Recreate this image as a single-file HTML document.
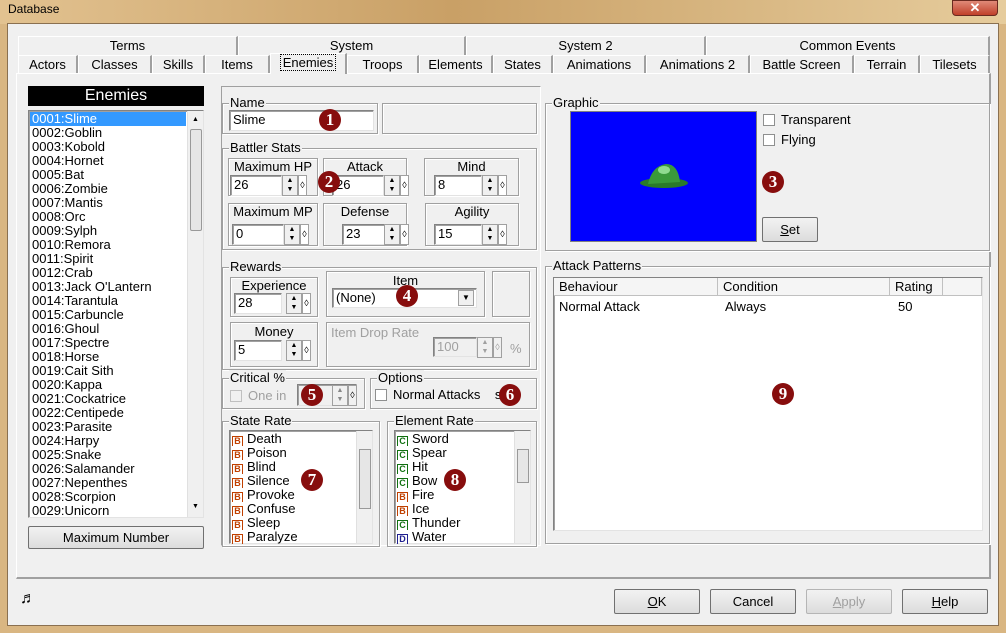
<!DOCTYPE html><html><head><style>
*{box-sizing:border-box}body{margin:0;width:1006px;height:633px;overflow:hidden;background:#d9b682;font-family:"Liberation Sans",sans-serif;font-size:13px;color:#000;position:relative}
.a{position:absolute}
#win{left:7px;top:23px;width:992px;height:603px;background:#f0f0f0;border:1px solid #8a7050}
.tab{position:absolute;height:19px;border:1px solid #fff;border-right:2px solid #a0a0a0;border-bottom:none;text-align:center;line-height:18px;background:#f0f0f0;font-size:13px}
.gb{position:absolute;border:1px solid #a0a0a0;box-shadow:inset 1px 1px 0 #fff,1px 1px 0 #fff}
.gb>.l{position:absolute;top:-9px;left:6px;background:#f0f0f0;padding:0 1px;line-height:16px}
.in{position:absolute;background:#fff;border:1px solid #828282;border-right-color:#e3e3e3;border-bottom-color:#e3e3e3;box-shadow:inset 1px 1px 0 #a0a0a0;padding-left:3px;line-height:18px}
.btn{position:absolute;border:1px solid #707070;background:linear-gradient(#f2f2f2,#dcdcdc);text-align:center;border-radius:2px}
.bd{position:absolute;width:22px;height:22px;border-radius:50%;background:#870d0d;color:#fff;font:bold 17px "Liberation Serif",serif;text-align:center;line-height:22px}
.sp{position:absolute;width:16px;height:21px;background:#f0f0f0;border:1px solid #a0a0a0;font-size:7px;line-height:9px;text-align:center}
.dm{position:absolute;width:9px;height:21px;border:1px solid #a0a0a0;font-size:9px;line-height:19px;text-align:center;background:#fff}
.r{height:14px;line-height:14px;overflow:hidden;white-space:nowrap}
.ic{display:inline-block;width:11px;height:11px;border:1px solid;font:bold 9px "Liberation Sans",sans-serif;line-height:9px;text-align:center;margin:0 4px 0 2px;vertical-align:-1px}
.B{color:#c04000;border-color:#c04000}.C{color:#107010;border-color:#107010}.D{color:#202090;border-color:#202090}
.sb{position:absolute;width:16px;background:#f0f0f0;border-left:1px solid #e0e0e0}
.th{position:absolute;top:0;height:18px;border-right:1px solid #c0c0c0;border-bottom:1px solid #c0c0c0;padding-left:5px;line-height:17px;background:#f5f5f5}
.cb{display:inline-block;width:12px;height:12px;border:1px solid #8e8f8f;background:#fff;vertical-align:-2px;margin-right:6px}
</style></head><body>
<div class="a" style="left:0;top:0;width:1006px;height:24px;background:linear-gradient(90deg,#e2c290,#c9a066 45%,#e6cc9c)"></div>
<div class="a" style="left:8px;top:2px;font-size:12px">Database</div>
<div class="a" style="left:952px;top:0;width:46px;height:16px;background:linear-gradient(#e08a78,#c0402a);border:1px solid #6a2a20;border-radius:0 0 4px 4px;color:#fff;text-align:center;font-weight:bold;line-height:14px">✕</div>
<div id="win" class="a"></div>
<div class="tab" style="left:18px;top:36px;width:220px">Terms</div>
<div class="tab" style="left:238px;top:36px;width:228px">System</div>
<div class="tab" style="left:466px;top:36px;width:240px">System 2</div>
<div class="tab" style="left:706px;top:36px;width:284px">Common Events</div>
<div class="tab" style="left:18px;top:55px;width:60px">Actors</div>
<div class="tab" style="left:78px;top:55px;width:74px">Classes</div>
<div class="tab" style="left:152px;top:55px;width:53px">Skills</div>
<div class="tab" style="left:205px;top:55px;width:65px">Items</div>
<div class="tab" style="left:270px;top:53px;width:77px;height:21px;z-index:2"><span style="outline:1px dotted #000;padding:0 2px">Enemies</span></div>
<div class="tab" style="left:347px;top:55px;width:72px">Troops</div>
<div class="tab" style="left:419px;top:55px;width:74px">Elements</div>
<div class="tab" style="left:493px;top:55px;width:60px">States</div>
<div class="tab" style="left:553px;top:55px;width:93px">Animations</div>
<div class="tab" style="left:646px;top:55px;width:104px">Animations 2</div>
<div class="tab" style="left:750px;top:55px;width:104px">Battle Screen</div>
<div class="tab" style="left:854px;top:55px;width:66px">Terrain</div>
<div class="tab" style="left:920px;top:55px;width:70px">Tilesets</div>
<div class="a" style="left:16px;top:73px;width:975px;height:506px;border:1px solid #fff;border-right:2px solid #a0a0a0;border-bottom:2px solid #a0a0a0"></div>
<div class="a" style="left:28px;top:86px;width:176px;height:20px;background:#000;color:#fff;font-size:16px;text-align:center;line-height:20px">Enemies</div>
<div class="in" style="left:28px;top:110px;width:176px;height:408px;padding:1px 0 0 1px;line-height:14px">
<div style="background:#3399ff;color:#fff;width:156px;padding-left:2px">0001:Slime</div>
<div style="padding-left:2px">0002:Goblin<br>0003:Kobold<br>0004:Hornet<br>0005:Bat<br>0006:Zombie<br>0007:Mantis<br>0008:Orc<br>0009:Sylph<br>0010:Remora<br>0011:Spirit<br>0012:Crab<br>0013:Jack O'Lantern<br>0014:Tarantula<br>0015:Carbuncle<br>0016:Ghoul<br>0017:Spectre<br>0018:Horse<br>0019:Cait Sith<br>0020:Kappa<br>0021:Cockatrice<br>0022:Centipede<br>0023:Parasite<br>0024:Harpy<br>0025:Snake<br>0026:Salamander<br>0027:Nepenthes<br>0028:Scorpion<br>0029:Unicorn</div>
<div class="sb" style="right:0;top:0;height:406px"><div style="position:absolute;left:2px;top:18px;width:12px;height:102px;border:1px solid #999;border-radius:2px;background:#e6e6e6"></div><div style="position:absolute;left:4px;top:2px;font-size:7px">▲</div><div style="position:absolute;left:4px;bottom:3px;font-size:7px">▼</div></div>
</div>
<div class="btn" style="left:28px;top:526px;width:176px;height:23px;line-height:21px">Maximum Number</div>
<div class="a" style="left:221px;top:86px;width:320px;height:460px;border:1px solid #a0a0a0;border-right-color:#fff;border-bottom-color:#fff"></div>
<div class="gb" style="left:222px;top:103px;width:156px;height:31px"><span class="l">Name</span></div>
<div class="in" style="left:229px;top:110px;width:145px;height:21px">Slime</div>
<div class="gb" style="left:382px;top:103px;width:155px;height:31px"></div>
<div class="gb" style="left:222px;top:148px;width:315px;height:102px"><span class="l">Battler Stats</span></div>
<div class="gb" style="left:228px;top:158px;width:90px;height:38px;text-align:center;line-height:16px">Maximum HP</div>
<div class="gb" style="left:323px;top:158px;width:84px;height:38px;text-align:center;line-height:16px">Attack</div>
<div class="gb" style="left:424px;top:158px;width:95px;height:38px;text-align:center;line-height:16px">Mind</div>
<div class="gb" style="left:228px;top:203px;width:90px;height:43px;text-align:center;line-height:16px">Maximum MP</div>
<div class="gb" style="left:323px;top:203px;width:84px;height:43px;text-align:center;line-height:16px">Defense</div>
<div class="gb" style="left:425px;top:203px;width:94px;height:43px;text-align:center;line-height:16px">Agility</div>
<div class="in" style="left:230px;top:175px;width:52px;height:21px">26</div><div class="sp" style="left:282px;top:175px">▲<br>▼</div><div class="dm" style="left:298px;top:175px">◊</div>
<div class="in" style="left:332px;top:175px;width:52px;height:21px">26</div><div class="sp" style="left:384px;top:175px">▲<br>▼</div><div class="dm" style="left:400px;top:175px">◊</div>
<div class="in" style="left:434px;top:175px;width:48px;height:21px">8</div><div class="sp" style="left:482px;top:175px">▲<br>▼</div><div class="dm" style="left:498px;top:175px">◊</div>
<div class="in" style="left:232px;top:224px;width:52px;height:21px">0</div><div class="sp" style="left:284px;top:224px">▲<br>▼</div><div class="dm" style="left:300px;top:224px">◊</div>
<div class="in" style="left:342px;top:224px;width:52px;height:21px">23</div><div class="sp" style="left:384px;top:224px">▲<br>▼</div><div class="dm" style="left:400px;top:224px">◊</div>
<div class="in" style="left:434px;top:224px;width:48px;height:21px">15</div><div class="sp" style="left:482px;top:224px">▲<br>▼</div><div class="dm" style="left:498px;top:224px">◊</div>
<div class="gb" style="left:222px;top:267px;width:315px;height:103px"><span class="l">Rewards</span></div>
<div class="gb" style="left:230px;top:277px;width:88px;height:40px;text-align:center;line-height:16px">Experience</div>
<div class="in" style="left:234px;top:293px;width:48px;height:21px">28</div><div class="sp" style="left:286px;top:293px">▲<br>▼</div><div class="dm" style="left:302px;top:293px">◊</div>
<div class="gb" style="left:326px;top:271px;width:159px;height:46px;text-align:center;line-height:18px">Item</div>
<div class="in" style="left:332px;top:288px;width:145px;height:20px;line-height:17px">(None)</div><div class="sp" style="left:458px;top:290px;height:16px;font-size:8px;line-height:14px">▼</div>
<div class="gb" style="left:492px;top:271px;width:38px;height:46px"></div>
<div class="gb" style="left:230px;top:322px;width:88px;height:45px;text-align:center;line-height:18px">Money</div>
<div class="in" style="left:234px;top:340px;width:48px;height:21px">5</div><div class="sp" style="left:286px;top:340px">▲<br>▼</div><div class="dm" style="left:302px;top:340px">◊</div>
<div class="gb" style="left:326px;top:322px;width:204px;height:45px"></div>
<div class="a" style="left:331px;top:325px;color:#a0a0a0">Item Drop Rate</div>
<div class="in" style="left:433px;top:337px;width:44px;height:20px;background:#f0f0f0;color:#a0a0a0;line-height:17px">100</div><div class="sp" style="left:477px;top:337px;color:#a0a0a0">▲<br>▼</div><div class="dm" style="left:493px;top:337px;background:#f0f0f0;color:#a0a0a0">◊</div>
<div class="a" style="left:510px;top:341px;color:#a0a0a0">%</div>
<div class="gb" style="left:222px;top:378px;width:143px;height:31px"><span class="l">Critical %</span></div>
<div class="a" style="left:230px;top:388px;color:#a0a0a0"><span class="cb" style="background:#f0f0f0;border-color:#c0c0c0"></span>One in</div>
<div class="in" style="left:297px;top:384px;width:60px;height:22px;background:#f0f0f0"></div><div class="sp" style="left:332px;top:385px;color:#888">▲<br>▼</div><div class="dm" style="left:348px;top:385px;background:#f0f0f0">◊</div>
<div class="gb" style="left:370px;top:378px;width:167px;height:31px"><span class="l">Options</span></div>
<div class="a" style="left:375px;top:387px"><span class="cb"></span>Normal Attacks &nbsp; &nbsp;s</div>
<div class="gb" style="left:222px;top:421px;width:158px;height:126px"><span class="l">State Rate</span></div>
<div class="in" style="left:229px;top:430px;width:144px;height:114px;padding:1px 0 0;line-height:14px">
<div class="r"><span class="ic B">B</span>Death</div><div class="r"><span class="ic B">B</span>Poison</div><div class="r"><span class="ic B">B</span>Blind</div><div class="r"><span class="ic B">B</span>Silence</div><div class="r"><span class="ic B">B</span>Provoke</div><div class="r"><span class="ic B">B</span>Confuse</div><div class="r"><span class="ic B">B</span>Sleep</div><div class="r"><span class="ic B">B</span>Paralyze</div>
<div class="sb" style="right:0;top:0;height:112px"><div style="position:absolute;left:2px;top:18px;width:12px;height:60px;border:1px solid #999;background:#e6e6e6"></div></div></div>
<div class="gb" style="left:387px;top:421px;width:150px;height:126px"><span class="l">Element Rate</span></div>
<div class="in" style="left:394px;top:430px;width:137px;height:114px;padding:1px 0 0;line-height:14px">
<div class="r"><span class="ic C">C</span>Sword</div><div class="r"><span class="ic C">C</span>Spear</div><div class="r"><span class="ic C">C</span>Hit</div><div class="r"><span class="ic C">C</span>Bow</div><div class="r"><span class="ic B">B</span>Fire</div><div class="r"><span class="ic B">B</span>Ice</div><div class="r"><span class="ic C">C</span>Thunder</div><div class="r"><span class="ic D">D</span>Water</div>
<div class="sb" style="right:0;top:0;height:112px"><div style="position:absolute;left:2px;top:18px;width:12px;height:34px;border:1px solid #999;background:#e6e6e6"></div></div></div>
<div class="gb" style="left:545px;top:103px;width:445px;height:148px"><span class="l">Graphic</span></div>
<div class="a" style="left:570px;top:111px;width:187px;height:131px;background:#0000ff;border:1px solid #808080"></div>
<svg class="a" style="left:638px;top:160px" width="52" height="32"><ellipse cx="26" cy="23" rx="24" ry="5" fill="#2a7a2a"/><path d="M10 24 Q14 6 28 4 Q40 4 42 22 Z" fill="#3a9a3a"/><ellipse cx="26" cy="10" rx="6" ry="4" fill="#8fdc8f"/></svg>
<div class="a" style="left:763px;top:112px"><span class="cb"></span>Transparent</div>
<div class="a" style="left:763px;top:132px"><span class="cb"></span>Flying</div>
<div class="btn" style="left:762px;top:217px;width:56px;height:25px;line-height:23px"><u>S</u>et</div>
<div class="gb" style="left:545px;top:266px;width:445px;height:278px"><span class="l">Attack Patterns</span></div>
<div class="in" style="left:553px;top:277px;width:430px;height:254px;padding:0">
<div class="th" style="left:0;width:164px">Behaviour</div><div class="th" style="left:164px;width:172px">Condition</div><div class="th" style="left:336px;width:53px">Rating</div><div class="th" style="left:389px;width:39px"></div>
<div class="a" style="left:5px;top:20px">Normal Attack</div><div class="a" style="left:171px;top:20px">Always</div><div class="a" style="left:344px;top:20px">50</div></div>
<div class="bd" style="left:319px;top:109px">1</div>
<div class="bd" style="left:318px;top:171px">2</div>
<div class="bd" style="left:762px;top:171px">3</div>
<div class="bd" style="left:396px;top:285px">4</div>
<div class="bd" style="left:301px;top:384px">5</div>
<div class="bd" style="left:499px;top:384px">6</div>
<div class="bd" style="left:301px;top:469px">7</div>
<div class="bd" style="left:444px;top:469px">8</div>
<div class="bd" style="left:772px;top:383px">9</div>
<div class="a" style="left:20px;top:590px;font-size:16px;font-weight:bold">♬</div>
<div class="btn" style="left:614px;top:589px;width:86px;height:25px;line-height:23px"><u>O</u>K</div>
<div class="btn" style="left:710px;top:589px;width:86px;height:25px;line-height:23px">Cancel</div>
<div class="btn" style="left:806px;top:589px;width:86px;height:25px;line-height:23px;color:#a0a0a0;border-color:#b5b5b5"><u>A</u>pply</div>
<div class="btn" style="left:902px;top:589px;width:86px;height:25px;line-height:23px"><u>H</u>elp</div>
</body></html>
